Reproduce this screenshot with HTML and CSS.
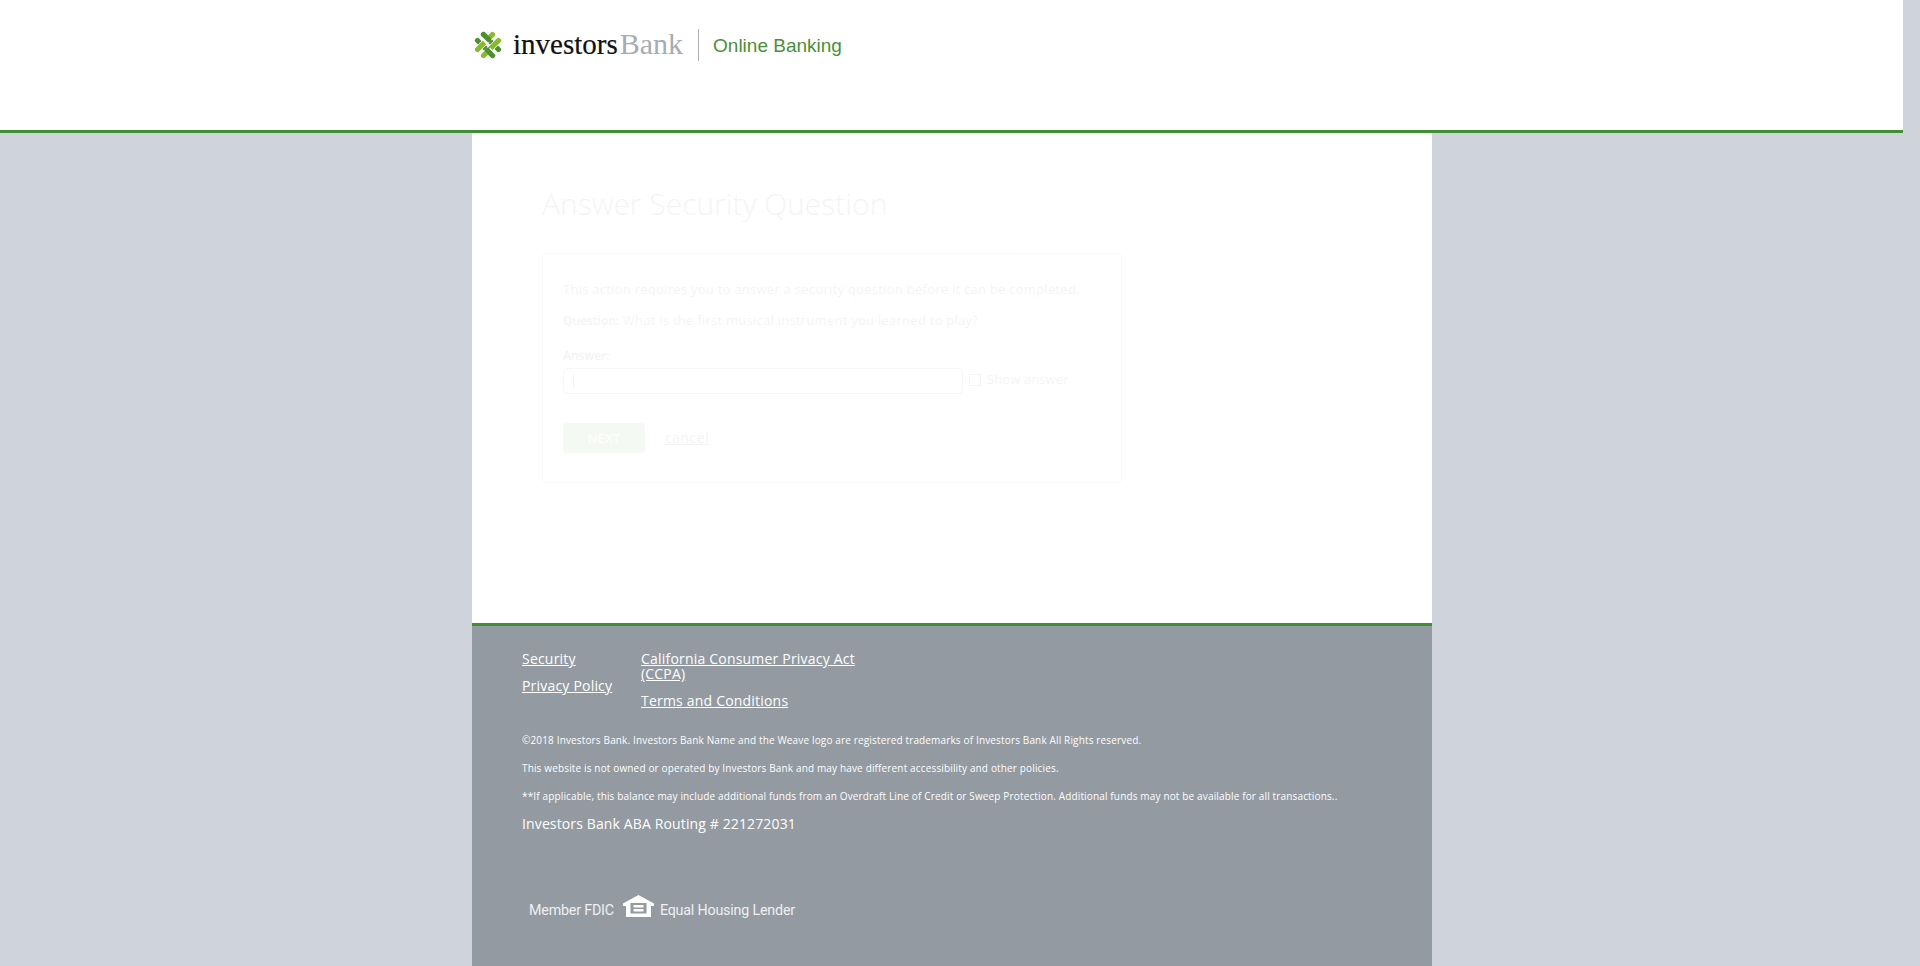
FILE: index.html
```html
<!DOCTYPE html>
<html>
	<head>
		<meta charset="UTF-8">
		<title>Online Banking</title>
		<link rel="stylesheet" href="styles.css">
	</head>
	<body>
		<div id="page">
			<div id="header">
				<div class="wrap header-row">
					<svg class="clover" viewBox="0 0 28 28" width="28" height="28">
						<g fill="none" stroke-linecap="round" stroke-width="5.200">
							<path d="M9.500 3.500L24.500 18.500" stroke="#4f8f2f"/>
							<path d="M3.500 9.500L18.500 24.500" stroke="#4f8f2f"/>
							<path d="M3.500 18.500L18.500 3.500" stroke="#fff" stroke-width="6.200"/>
							<path d="M3.500 18.500L18.500 3.500" stroke="#86bc25"/>
							<path d="M9.500 24.500L24.500 9.500" stroke="#fff" stroke-width="6.200"/>
							<path d="M9.500 24.500L24.500 9.500" stroke="#86bc25"/>
							<path d="M8 4.500L14.500 11" stroke="#fff" stroke-width="6.200" stroke-linecap="butt"/>
							<path d="M9.500 3.500L14.500 8.500" stroke="#4f8f2f"/>
							<path d="M14 19L20 25" stroke="#fff" stroke-width="6.200" stroke-linecap="butt"/>
							<path d="M13.500 19.500L18.500 24.500" stroke="#4f8f2f"/>
						</g>
					</svg>
					<span class="logo-text">investors<span class="logo-bank">Bank</span></span>
					<span class="logo-line"></span>
					<span class="logo-title">Online Banking</span>
				</div>
			</div>
			<div class="wrap main">
				<div class="faded">
					<h1>Answer Security Question</h1>
					<div class="card">
						<p class="intro">This action requires you to answer a security question before it can be completed.</p>
						<p class="question"><b>Question:</b> What is the first musical instrument you learned to play?</p>
						<div class="answer-label">Answer:</div>
						<div class="answer-row">
							<div class="answer-field"><span class="caret"></span></div>
							<span class="check"></span>
							<span class="show-label">Show answer</span>
						</div>
						<div class="actions">
							<span class="btn-next">NEXT</span>
							<a class="cancel" href="#">cancel</a>
						</div>
					</div>
				</div>
			</div>
			<div class="wrap footer">
				<div class="foot-links">
					<ul class="col-one">
						<li><a href="#">Security</a></li>
						<li><a href="#">Privacy Policy</a></li>
					</ul>
					<ul class="col-two">
						<li><a href="#">California Consumer Privacy Act (CCPA)</a></li>
						<li><a href="#">Terms and Conditions</a></li>
					</ul>
				</div>
				<p class="small">©2018 Investors Bank. Investors Bank Name and the Weave logo are registered trademarks of Investors Bank All Rights reserved.</p>
				<p class="small">This website is not owned or operated by Investors Bank and may have different accessibility and other policies.</p>
				<p class="small">**If applicable, this balance may include additional funds from an Overdraft Line of Credit or Sweep Protection. Additional funds may not be available for all transactions..</p>
				<p class="routing">Investors Bank ABA Routing # 221272031</p>
				<div class="member">
					<span>Member FDIC</span>
					<svg class="ehl" viewBox="0 0 31 22" width="31" height="22">
						<path fill="#fff" fill-rule="evenodd" d="M15.500 0L31 8.500V11H28V22H3V11H0V8.500ZM7.500 8V18.500H23.500V8Z"/>
						<path fill="#fff" d="M10.500 10H20.500V12.500H10.500ZM10.500 14H20.500V16.500H10.500Z"/>
					</svg>
					<span>Equal Housing Lender</span>
				</div>
			</div>
		</div>
	</body>
</html>
```

FILE: styles.css
```css
*{
	margin: 0;
	padding: 0;
	border: none;
	box-sizing: border-box;
}
ul,li{
	list-style: none;
}
html,body{
	height: 100%;
	overflow: hidden;
}
body{
	background: #cfd3db;
	font-family: "Open Sans", sans-serif;
	color: #333;
}
#page{
	width: 1903px;
	height: 966px;
	display: flex;
	flex-direction: column;
}
.wrap{
	width: 960px;
	margin-left: 472px;
}
#header{
	height: 133px;
	flex: none;
	background: #fff;
	border-bottom: 3px solid #3f9033;
}
.header-row{
	display: flex;
	align-items: flex-start;
	padding: 31px 0 0 2px;
}
.clover{
	flex: none;
}
.logo-text{
	margin-left: 11px;
	margin-top: -5px;
	font: 29px/36px "Liberation Serif", serif;
	color: #111;
	-webkit-text-stroke: 0.2px #111;
}
.logo-bank{
	font-size: 30px;
	color: #a6acb3;
	margin-left: 2px;
	-webkit-text-stroke: 0;
}
.logo-line{
	width: 1px;
	height: 32px;
	margin: -2px 0 0 15px;
	background: #a9aeb3;
}
.logo-title{
	margin-left: 14px;
	font: 19px/30px "Liberation Sans", sans-serif;
	color: #4a9037;
}
.main{
	height: 490px;
	flex: none;
	background: #fff;
	padding: 0 0 0 70px;
}
.faded{
	opacity: 0.05;
}
h1{
	font-size: 30px;
	font-weight: 300;
	line-height: 44px;
	padding-top: 49px;
	height: 120px;
}
.card{
	width: 580px;
	height: 230px;
	border: 1px solid #999;
	border-radius: 4px;
	padding: 26px 20px 0;
	font-size: 13px;
	letter-spacing: 0.26px;
}
.intro{
	line-height: 18px;
}
.question{
	line-height: 18px;
	margin-top: 13px;
}
.question b{
	font-size: 12px;
	font-weight: 600;
	letter-spacing: 0;
}
.answer-label{
	font-size: 12px;
	font-weight: 600;
	letter-spacing: 0;
	line-height: 18px;
	margin-top: 17px;
}
.answer-row{
	display: flex;
	align-items: center;
	margin-top: 3px;
}
.answer-field{
	width: 400px;
	height: 26px;
	border: 1px solid #777;
	border-radius: 4px;
	padding: 5px 0 0 9px;
}
.caret{
	display: block;
	width: 1px;
	height: 14px;
	background: #333;
}
.check{
	width: 12px;
	height: 12px;
	margin: -2px 6px 0 6px;
	border: 1px solid #555;
}
.show-label{
	margin-top: -4px;
	letter-spacing: 0.1px;
}
.actions{
	display: flex;
	align-items: center;
	margin-top: 29px;
}
.btn-next{
	width: 82px;
	height: 30px;
	background: #46992f;
	border-radius: 4px;
	color: #fff;
	text-align: center;
	line-height: 30px;
}
.cancel{
	margin: -2px 0 0 20px;
	font-size: 14px;
	letter-spacing: 0.5px;
	color: #333;
}
.footer{
	flex: 1;
	background: #939aa1;
	border-top: 3px solid #3f9033;
	padding: 25px 50px 0;
	color: #fff;
}
.footer a{
	color: #fff;
}
.foot-links{
	display: flex;
	font-size: 14px;
	line-height: 15px;
	letter-spacing: 0.2px;
}
.col-one{
	width: 119px;
}
.col-two{
	width: 225px;
}
.foot-links li{
	margin-bottom: 12px;
}
.small{
	font-size: 10px;
	line-height: 14px;
	margin-bottom: 14px;
	letter-spacing: 0.15px;
}
.foot-links + .small{
	margin-top: 13px;
}
.routing{
	font-size: 14px;
	line-height: 20px;
	margin-top: -3px;
	letter-spacing: 0.13px;
}
.member{
	display: flex;
	align-items: flex-end;
	margin: 61px 0 0 7px;
	font: 14.300px/20px Roboto, sans-serif;
	letter-spacing: -0.2px;
	color: #eef0f1;
}
.ehl{
	margin: 0 6px 3px 9px;
}
```
